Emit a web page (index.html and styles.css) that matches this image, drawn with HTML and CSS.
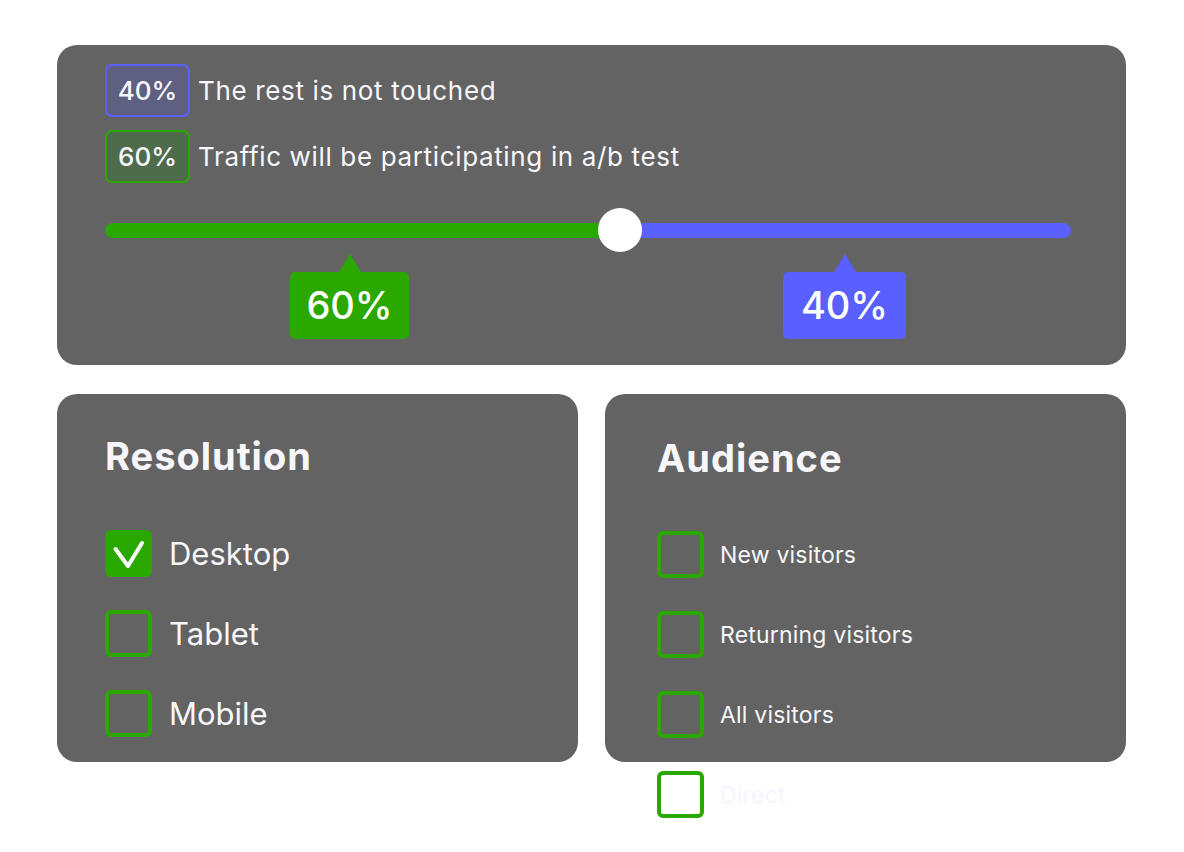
FILE: index.html
```html
<!DOCTYPE html>
<html lang="en">
<head>
    <meta charset="UTF-8">
    <meta name="viewport" content="width=device-width, initial-scale=1.0">
    <title>A/B test setup</title>
    <link rel="stylesheet" href="styles.css">
</head>
<body>
    <div class="page">
        <div class="card split_card">
            <div class="legend">
                <div class="legend_row">
                    <span class="badge badge_blue">40%</span>
                    <span class="legend_text">The rest is not touched</span>
                </div>
                <div class="legend_row">
                    <span class="badge badge_green">60%</span>
                    <span class="legend_text">Traffic will be participating in a/b test</span>
                </div>
            </div>

            <div class="slider">
                <div class="track_green"></div>
                <div class="track_blue"></div>
                <i class="thumb"></i>
            </div>

            <div class="tips">
                <div class="tip tip_green">60%</div>
                <div class="tip tip_blue">40%</div>
            </div>
        </div>

        <div class="columns">
            <div class="card option_card">
                <h2 class="card_title">Resolution</h2>
                <ul class="options big">
                    <li>
                        <span class="box checked">
                            <svg width="47" height="47" viewBox="0 0 47 47">
                                <polyline points="10.5,19 23,36 37,13" fill="none" stroke="#fff" stroke-width="4" stroke-linecap="round" stroke-linejoin="round"/>
                            </svg>
                        </span>
                        Desktop
                    </li>
                    <li><span class="box"></span>Tablet</li>
                    <li><span class="box"></span>Mobile</li>
                </ul>
            </div>

            <div class="card option_card audience_card">
                <h2 class="card_title audience">Audience</h2>
                <ul class="options small">
                    <li><span class="box"></span>New visitors</li>
                    <li><span class="box"></span>Returning visitors</li>
                    <li><span class="box"></span>All visitors</li>
                    <li class="faded"><span class="box"></span>Direct</li>
                </ul>
            </div>
        </div>
    </div>
</body>
</html>
```

FILE: styles.css
```css
*{
    padding: 0;
    margin: 0;
    box-sizing: border-box;
}

body{
    background-color: #fff;
    font-family: Inter, "Noto Sans", sans-serif;
    color: #f7f7fb;
}

.page{
    width: 1069px;
    margin-left: 57px;
    padding-top: 45px;
    padding-bottom: 60px;
}

.card{
    background-color: #636363;
    border-radius: 20px;
}

.split_card{
    height: 320px;
    padding: 19px 55px 0 48px;
}

.legend{
    display: flex;
    flex-direction: column;
    gap: 13px;
}

.legend_row{
    display: flex;
    align-items: center;
    gap: 8px;
}

.badge{
    width: 85px;
    height: 53px;
    line-height: 49px;
    text-align: center;
    border-radius: 7px;
    border: 2px solid;
    font-size: 26px;
    font-weight: 500;
}

.badge_blue{
    background-color: #5f5f82;
    border-color: #5b5fff;
}

.badge_green{
    background-color: #4e6b4c;
    border-color: #2aa800;
}

.legend_text{
    font-size: 26px;
    letter-spacing: 0.65px;
}

.slider{
    position: relative;
    display: flex;
    align-items: center;
    height: 44px;
    margin-top: 25px;
}

.track_green{
    width: 515px;
    height: 15px;
    background-color: #2aa800;
    border-radius: 8px 0 0 8px;
}

.track_blue{
    flex: 1;
    height: 15px;
    background-color: #5a5fff;
    border-radius: 0 8px 8px 0;
}

.thumb{
    position: absolute;
    left: 493px;
    top: 0;
    width: 44px;
    height: 44px;
    border-radius: 50%;
    background-color: #fff;
}

.tips{
    display: flex;
    padding-top: 20px;
}

.tip{
    position: relative;
    height: 67px;
    line-height: 67px;
    text-align: center;
    border-radius: 5px;
    font-size: 38px;
    font-weight: 500;
    color: #fff;
}

.tip::before{
    content: "";
    position: absolute;
    left: 50%;
    top: -18px;
    margin-left: -11px;
    border-left: 11px solid transparent;
    border-right: 11px solid transparent;
    border-bottom: 18px solid;
}

.tip_green{
    width: 119px;
    margin-left: 185px;
    background-color: #2aa800;
}

.tip_green::before{
    border-bottom-color: #2aa800;
}

.tip_blue{
    width: 123px;
    margin-left: 374px;
    background-color: #5a5fff;
}

.tip_blue::before{
    border-bottom-color: #5a5fff;
}

.columns{
    display: grid;
    grid-template-columns: 1fr 1fr;
    align-items: start;
    gap: 27px;
    margin-top: 29px;
}

.option_card{
    height: 368px;
    padding: 38px 0 0 48px;
}

.audience_card{
    padding-left: 52px;
}

.card_title{
    font-size: 38px;
    font-weight: 700;
    line-height: 48px;
    letter-spacing: 1px;
}

.card_title.audience{
    margin-top: 2px;
}

.options{
    list-style: none;
    display: flex;
    flex-direction: column;
    gap: 33px;
    margin-top: 50px;
}

.options.small{
    margin-top: 49px;
}

.options li{
    display: flex;
    align-items: center;
    flex-shrink: 0;
    height: 47px;
}

.options.big li{
    font-size: 31px;
    gap: 17px;
}

.options.small li{
    font-size: 23px;
    letter-spacing: 0.2px;
    gap: 16px;
}

.box{
    width: 47px;
    height: 47px;
    border: 4px solid #2aa800;
    border-radius: 6px;
    flex-shrink: 0;
}

.box.checked{
    border: none;
    background-color: #2aa800;
}

.box svg{
    display: block;
}

.options li.faded{
    color: #f5f5ff;
}
```
